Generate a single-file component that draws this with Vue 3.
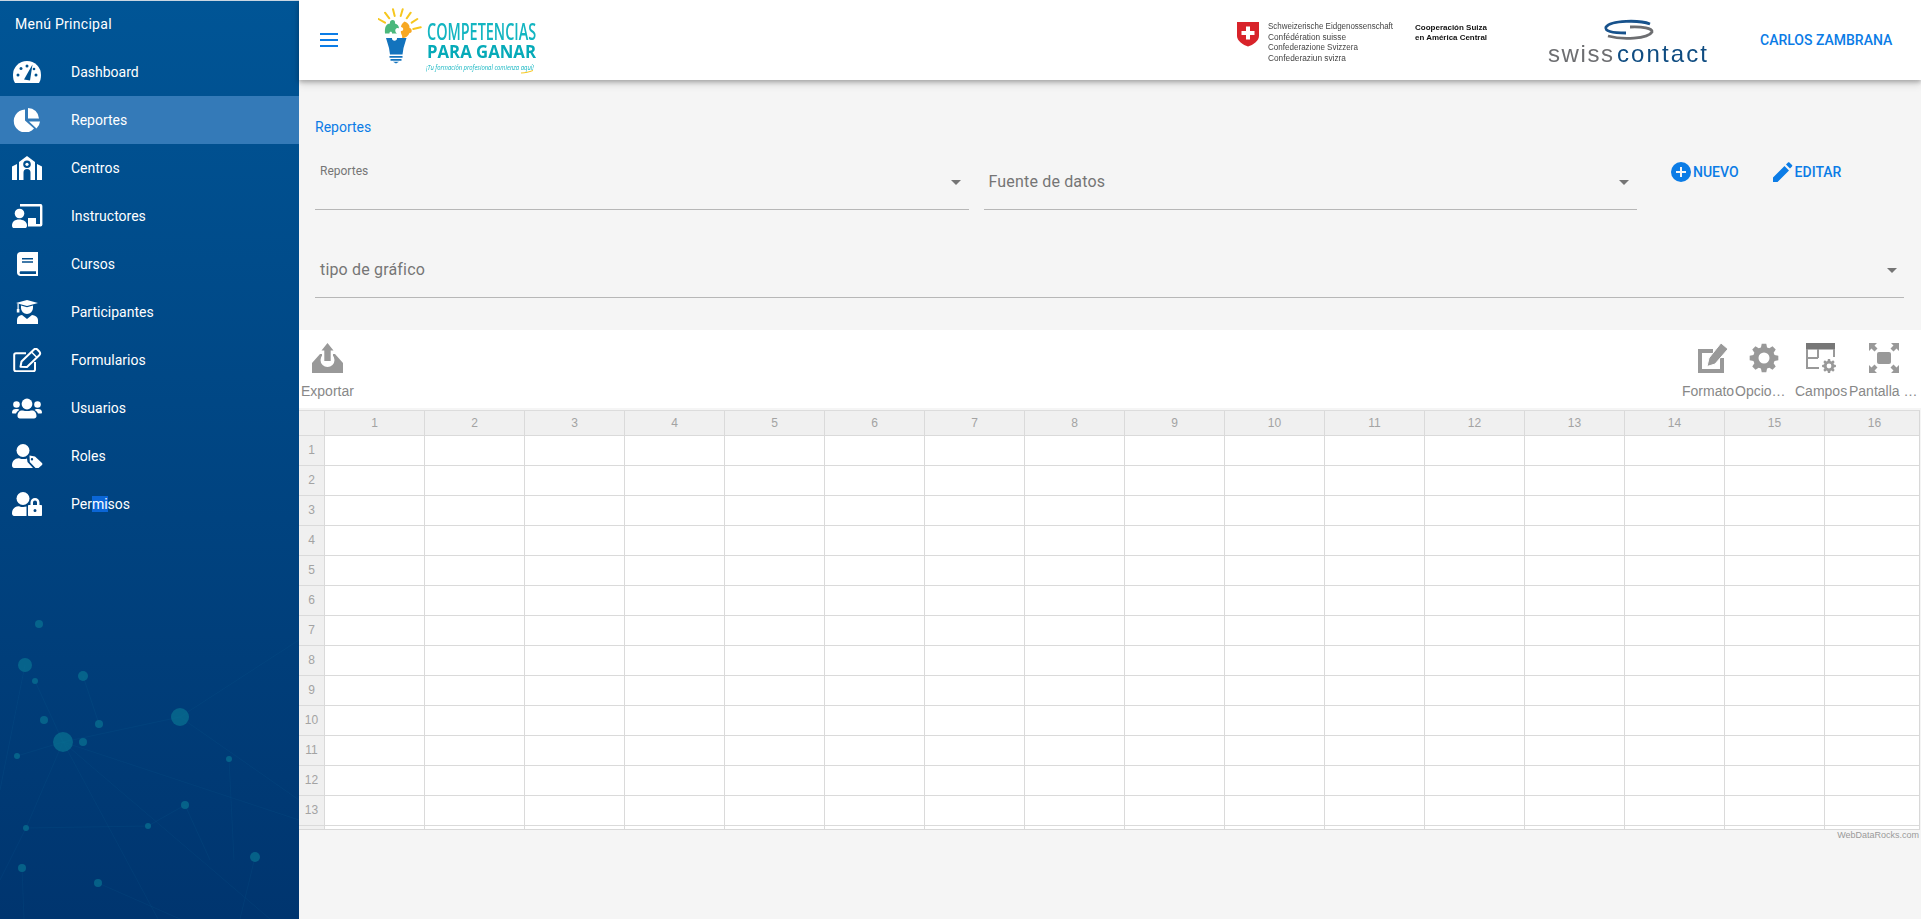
<script setup>
const hole = '#00528f'
const menu = [
  { label: 'Dashboard', icon: `<path d="M4 23C2.6 21 2 18 2 15A14 14 0 0 1 30 15C30 18 29.4 21 28 23Z"/><g fill="${hole}"><circle cx="7" cy="15" r="1.5"/><circle cx="10" cy="8.5" r="1.5"/><circle cx="16" cy="6" r="1.5"/><circle cx="25" cy="15" r="1.5"/><circle cx="23" cy="9" r="1.3"/><path d="M21.5 4.5L13 19.5 19 20.5Z"/></g>` },
  { label: 'Reportes', active: true, icon: `<path d="M14 1.5A11.5 11.5 0 1 0 23 20.5L14 12.5Z"/><path d="M17 0A11 11 0 0 1 28 10.5H17Z"/><path d="M18 13.5H29A11 11 0 0 1 25.5 20.5Z"/>` },
  { label: 'Centros', icon: `<path fill-rule="evenodd" d="M16 0L24 6V24H19.5V16.5A3.5 3.5 0 0 0 12.5 16.5V24H8V6ZM16 4.5A3.8 3.8 0 1 0 16 12.1 3.8 3.8 0 0 0 16 4.5Z"/><circle cx="16" cy="8.3" r="1.6"/><path d="M1 10.5L6 8V24H1Z"/><path d="M31 10.5L26 8V24H31Z"/>` },
  { label: 'Instructores', icon: `<circle cx="8.5" cy="9.5" r="4.8"/><path d="M1 21.5C1 17.5 4 15.5 8 15.5S16 17.5 16 21.5C16 23.5 15 24 14 24H3C2 24 1 23.5 1 21.5Z"/><path d="M9 1.2H29.5A.8 .8 0 0 1 30.2 2V20.5A.8 .8 0 0 1 29.5 21.2H17" fill="none" stroke="currentColor" stroke-width="2.4"/><path d="M17 14H25V21H17Z"/>` },
  { label: 'Cursos', icon: `<path fill-rule="evenodd" d="M9.5 0H27V24H9.5C7.5 24 6 22.5 6 20.5V3.500C6 1.500 7.500 0 9.5 0ZM10 19.300C9 19.300 8.600 20 8.600 20.800S9 22 10 22H25V19.300ZM11 6V7.500H22V6ZM11 9.300V10.800H22V9.300Z"/>` },
  { label: 'Participantes', icon: `<path d="M16 0L27 3 16 6 5 3Z"/><rect x="6.500" y="3.500" width="1.200" height="7"/><rect x="5.800" y="9" width="2.600" height="3.500"/><path d="M10 5.500L16 7.300 22 5.500V8A6 6 0 0 1 10 8Z"/><path d="M6 24V20C6 17 8 15.500 11 15L16 19 21 15C24 15.500 27 17 27 20V24Z"/>` },
  { label: 'Formularios', icon: `<path d="M24 14V21.500A1.800 1.800 0 0 1 22.200 23.300H5A1.800 1.800 0 0 1 3.200 21.500V7A1.800 1.800 0 0 1 5 5.200H15" fill="none" stroke="currentColor" stroke-width="2"/><path d="M9.500 18.800L10.500 13.500 23 1.500C24 .6 25.300 .6 26.300 1.500L28.500 3.800C29.300 4.800 29.300 6 28.500 7L16 19Z" fill="none" stroke="currentColor" stroke-width="2" stroke-linejoin="round"/><path d="M20.500 4L26 9.500" stroke="currentColor" stroke-width="1.500"/>` },
  { label: 'Usuarios', icon: `<circle cx="16" cy="8" r="5.400"/><circle cx="5.500" cy="8.500" r="3.300"/><circle cx="26.500" cy="8.500" r="3.300"/><path d="M6.500 20C6.500 16 9 14 12 14.500C14.500 15.300 17.500 15.300 20 14.500C23 14 25.500 16 25.500 20C25.500 21.500 24.500 22.500 23 22.500H9C7.500 22.500 6.500 21.500 6.500 20Z"/><path d="M1 16.500C1 14 2.500 13 5 13S8 13.500 8.500 14C6.500 15 5.300 16.500 5 17.500H2C1.400 17.500 1 17 1 16.500Z"/><path d="M31 16.500C31 14 29.500 13 27 13S24 13.500 23.500 14C25.500 15 26.700 16.500 27 17.500H30C30.600 17.500 31 17 31 16.500Z"/>` },
  { label: 'Roles', icon: `<circle cx="12" cy="6.500" r="6.500"/><path d="M1 21.500C1 17 4 14 8 14.200C11 15.300 14 15.300 16 14.500L16.500 18 22 24H3C2 24 1 23 1 21.500Z"/><path fill-rule="evenodd" d="M18.500 11.500L24 12.500 31 19C31.500 19.700 31.500 20.300 31 21L27 24.500C26.300 25 25.500 25 25 24.500L18.800 18ZM21 14A1.200 1.200 0 1 0 21 16.400 1.200 1.200 0 0 0 21 14Z"/>` },
  { label: 'Permisos', select: true, icon: `<circle cx="12" cy="6.500" r="6.500"/><path d="M1 21.500C1 17 4 14 8 14.200C10.500 15.300 13 15.300 15.500 14.600V24H3C2 24 1 23 1 21.500Z"/><path fill-rule="evenodd" d="M19.500 13V10.500A4.500 4.500 0 0 1 28.500 10.500V13H30C30.600 13 31 13.400 31 14V23C31 23.600 30.600 24 30 24H18C17.400 24 17 23.600 17 23V14C17 13.400 17.400 13 18 13ZM22 13H26V10.500A2 2 0 0 0 22 10.500ZM24 17A1.500 1.500 0 1 0 24 20 1.500 1.500 0 0 0 24 17Z"/>` }
]
const nodes = [[39,624,4],[25,665,7],[35,681,3],[83,676,5],[44,720,4],[99,724,4],[63,742,10],[83,742,4],[17,756,3],[180,717,9],[229,759,3],[185,805,4],[148,826,3],[26,828,3],[22,868,4],[98,883,4],[255,857,5]]
const links = [[63,742,180,717],[63,742,299,820],[63,742,158,919],[63,742,270,919],[63,742,26,828],[26,828,0,880],[26,828,148,826],[148,826,185,805],[185,805,210,860],[180,717,299,800],[180,717,299,640],[25,665,0,790],[229,759,234,860],[255,857,240,919],[22,868,24,919],[98,883,180,919],[35,681,63,742],[17,756,63,742],[83,676,99,724]]

function gear(cx, cy, ro, ri, hr, teeth = 8) {
  const pts = []
  const step = (Math.PI * 2) / teeth
  for (let i = 0; i < teeth; i++) {
    const a = i * step
    const offs = [[-0.36, ri], [-0.2, ro], [0.2, ro], [0.36, ri]]
    for (const [o, r] of offs) {
      const t = a + o * step
      pts.push(`${(cx + r * Math.cos(t)).toFixed(2)} ${(cy + r * Math.sin(t)).toFixed(2)}`)
    }
  }
  return `M${pts.join('L')}ZM${cx - hr} ${cy}A${hr} ${hr} 0 1 0 ${cx + hr} ${cy}A${hr} ${hr} 0 1 0 ${cx - hr} ${cy}Z`
}
const bigGear = gear(15, 15, 14.5, 11, 5.5)
const smallGear = gear(23, 23, 7, 5.200, 2.400)

const columns = Array.from({ length: 16 }, (_, i) => i + 1)
const rows = Array.from({ length: 14 }, (_, i) => i + 1)
</script>

<template>
  <div class="app">
    <aside class="sidebar">
      <svg class="network" viewBox="0 0 299 919" aria-hidden="true">
        <line v-for="(l, i) in links" :key="'l' + i" :x1="l[0]" :y1="l[1]" :x2="l[2]" :y2="l[3]" class="link" />
        <circle v-for="(n, i) in nodes" :key="'n' + i" :cx="n[0]" :cy="n[1]" :r="n[2]" class="node" />
      </svg>
      <div class="menu-title">Menú Principal</div>
      <nav class="menu">
        <a v-for="m in menu" :key="m.label" class="menu-item" :class="{ active: m.active }">
          <svg class="menu-icon" viewBox="0 0 32 24" width="32" height="24" fill="currentColor" v-html="m.icon"></svg>
          <span v-if="m.select">Per<span class="selected">mi</span>sos</span>
          <span v-else>{{ m.label }}</span>
        </a>
      </nav>
    </aside>

    <main class="main">
      <header class="topbar">
        <button class="burger" aria-label="menu"><i></i><i></i><i></i></button>
        <svg class="logo" viewBox="378 5 162 70" width="162" height="70">
          <g stroke="#f6c71e" stroke-width="2" stroke-linecap="round">
            <path d="M378.500 19L385 22.700M385 12.700L389.300 18.300M393 9.300L394.700 16M402.700 9.300L400.700 16M410.700 12.700L406.700 18.300M417.300 19L411.700 22.700M420.700 27.300L413.300 29" />
          </g>
          <path fill="#4bb87c" d="M385 33.500C384.500 27 386 24 390 23.500C389 19 396 18.500 395 23.500C397.500 24 399 26 399 28.500C396 26.500 393.500 31 397 33.500H392C392.500 31 389 31 389.500 33.500Z" />
          <path fill="#f7a823" d="M404.500 21.500C407.500 22.500 410 25 409.500 28C412.500 28.500 412.500 33.500 409.500 33C408.500 36 405.500 38 402 38.500C403 35.500 400 33 401 31C404 31.500 404 27 401 27C401 25 402.500 23 404.500 21.500Z" />
          <path fill="#1373bd" d="M386 38H392C391.500 41.500 397.500 41.500 397 38H406.500L403.500 48 402.500 54.500H390L389 48Z" />
          <path fill="#1373bd" d="M389.500 56H402.500V57.700H389.500ZM390.500 59H401.500V60.700H390.500ZM393 61.700H399L396 63.500Z" />
          <text class="lg1" transform="translate(427 40) scale(.62 1)" textLength="176" lengthAdjust="spacingAndGlyphs">COMPETENCIAS</text>
          <text x="427" y="57.500" class="lg2" textLength="109" lengthAdjust="spacingAndGlyphs">PARA GANAR</text>
          <text class="lg3" transform="translate(426 69.500) scale(.7 1)" textLength="154" lengthAdjust="spacingAndGlyphs">¡Tu formación profesional comienza aquí!</text>
          <path d="M521 73C525 73 529 72 533 70.500" stroke="#f6c71e" stroke-width="1" fill="none" />
        </svg>
        <div class="spacer"></div>
        <svg class="partners" viewBox="1230 10 484 60" width="484" height="60">
          <path fill="#d8232a" d="M1237 22H1259V36C1259 41 1253 45 1248 46.500C1243 45 1237 41 1237 36Z" />
          <path fill="#fff" d="M1246 26.500H1250V31H1254.500V35H1250V39.500H1246V35H1241.500V31H1246Z" />
          <g class="swiss-lines">
            <text x="1268" y="29" textLength="125" lengthAdjust="spacingAndGlyphs">Schweizerische Eidgenossenschaft</text>
            <text x="1268" y="40" textLength="78" lengthAdjust="spacingAndGlyphs">Confédération suisse</text>
            <text x="1268" y="50" textLength="90" lengthAdjust="spacingAndGlyphs">Confederazione Svizzera</text>
            <text x="1268" y="60.500" textLength="78" lengthAdjust="spacingAndGlyphs">Confederaziun svizra</text>
          </g>
          <g class="coop">
            <text x="1415" y="30" textLength="72" lengthAdjust="spacingAndGlyphs">Cooperación Suiza</text>
            <text x="1415" y="40" textLength="72" lengthAdjust="spacingAndGlyphs">en América Central</text>
          </g>
          <path d="M1650 24C1640 20 1611 20 1606 27C1604 31 1612 33 1626 33" fill="none" stroke="#17528c" stroke-width="2.800" />
          <path d="M1608 36C1622 40 1648 39 1652 32C1653 28 1642 26.500 1630 27" fill="none" stroke="#6d6e71" stroke-width="2.800" />
          <text x="1548" y="62" class="sc sc-g" textLength="65" lengthAdjust="spacing">swiss</text>
          <text x="1617" y="62" class="sc sc-b" textLength="90" lengthAdjust="spacing">contact</text>
        </svg>
        <div class="user">CARLOS ZAMBRANA</div>
      </header>

      <section class="content">
        <div class="crumb">Reportes</div>
        <div class="form-row">
          <div class="field">
            <span class="field-label small">Reportes</span>
            <span class="caret"></span>
          </div>
          <div class="field">
            <span class="field-label">Fuente de datos</span>
            <span class="caret"></span>
          </div>
          <div class="actions">
            <button class="action">
              <svg width="20" height="20" viewBox="0 0 20 20"><circle cx="10" cy="10" r="10" fill="#0b7ce6" /><path d="M9 5H11V9H15V11H11V15H9V11H5V9H9Z" fill="#f5f5f5" /></svg>
              NUEVO
            </button>
            <button class="action">
              <svg width="20" height="20" viewBox="0 0 20 20"><path d="M0 20V15.500L11.500 4 16 8.500 4.500 20ZM13 2.500L15 .5C15.400 .1 16 .1 16.400 .5L19 3.100C19.400 3.500 19.400 4.100 19 4.500L17 6.500Z" fill="#0b7ce6" /></svg>
              EDITAR
            </button>
          </div>
        </div>
        <div class="field wide">
          <span class="field-label">tipo de gráfico</span>
          <span class="caret"></span>
        </div>
      </section>

      <section class="pivot">
        <div class="toolbar">
          <div class="tool export">
            <svg width="31" height="30" viewBox="0 0 31 30" fill="#999">
              <path d="M8 11H11V14H20V11H23L31 20V30H0V20Z" />
              <circle cx="15.500" cy="17" r="7" fill="#fff" />
              <rect x="10" y="10" width="11" height="7" fill="#fff" />
              <path d="M15.500 0L21.500 7.500H18.700V18H12.300V7.500H9.500Z" />
            </svg>
            <span>Exportar</span>
          </div>
          <div class="tool-group">
            <div class="tool t-format">
              <svg width="30" height="30" viewBox="0 0 30 30" fill="#999">
                <path d="M24 15V28H2V8H15" fill="none" stroke="#999" stroke-width="4" />
                <path d="M23 0L30 6 17 21 9 23.500 11 15Z" stroke="#fff" stroke-width="1" />
              </svg>
              <span>Formato</span>
            </div>
            <div class="tool t-options">
              <svg width="30" height="30" viewBox="0 0 30 30" fill="#999"><path fill-rule="evenodd" :d="bigGear" /></svg>
              <span>Opciones</span>
            </div>
            <div class="tool t-fields">
              <svg width="30" height="30" viewBox="0 0 30 30" fill="#999">
                <rect x="0" y="0" width="29" height="6.500" fill="#777" />
                <path d="M1 6V25H13M1 15H12M12 6V15M28 6V14" fill="none" stroke="#999" stroke-width="2" />
                <path fill-rule="evenodd" :d="smallGear" />
              </svg>
              <span>Campos</span>
            </div>
            <div class="tool t-full">
              <svg width="30" height="30" viewBox="0 0 30 30" fill="#999">
                <rect x="8" y="9" width="14" height="12" rx="2" />
                <path d="M0 0H8L5.500 2.500 8.500 5.500 5.500 8.500 2.500 5.500 0 8ZM30 0H22L24.500 2.500 21.500 5.500 24.500 8.500 27.500 5.500 30 8ZM0 30H8L5.500 27.500 8.500 24.500 5.500 21.500 2.500 24.500 0 22ZM30 30H22L24.500 27.500 21.500 24.500 24.500 21.500 27.500 24.500 30 22Z" />
              </svg>
              <span>Pantalla completa</span>
            </div>
          </div>
        </div>
        <div class="grid-wrap">
          <div class="grid-row head">
            <div class="cell corner"></div>
            <div v-for="c in columns" :key="c" class="cell col">{{ c }}</div>
          </div>
          <div v-for="r in rows" :key="r" class="grid-row">
            <div class="cell rowhead">{{ r }}</div>
            <div v-for="c in columns" :key="c" class="cell col body"></div>
          </div>
        </div>
        <div class="credit">WebDataRocks.com</div>
      </section>
    </main>
  </div>
</template>

<style>
html, body { margin: 0; padding: 0; background: #f5f5f5; }
</style>

<style scoped>
.app {
  display: flex;
  height: 919px;
  overflow: hidden;
  font-family: Roboto, "Liberation Sans", sans-serif;
  background: #f5f5f5;
}
.sidebar {
  position: relative;
  flex: 0 0 299px;
  box-sizing: border-box;
  height: 919px;
  border-top: 1px solid #c9d6e2;
  background: linear-gradient(180deg, #005596 0%, #00356f 100%);
  color: #fff;
  overflow: hidden;
}
.network {
  position: absolute;
  left: 0;
  top: -1px;
  width: 299px;
  height: 919px;
}
.link { stroke: #0d6f97; stroke-opacity: .13; stroke-width: 1; }
.node { fill: #0a7a96; fill-opacity: .62; }
.menu-title {
  position: relative;
  height: 47px;
  line-height: 47px;
  padding-left: 15px;
  font-size: 14px;
  letter-spacing: .28px;
}
.menu { position: relative; display: flex; flex-direction: column; }
.menu-item {
  display: flex;
  align-items: center;
  height: 48px;
  padding-left: 11px;
  font-size: 14px;
}
.menu-item.active { background: #347ab8; }
.menu-icon { flex: none; margin-right: 28px; }
.selected { background: #0b66d6; }

.main { flex: 1; min-width: 0; display: flex; flex-direction: column; }
.topbar {
  position: relative;
  z-index: 2;
  flex: none;
  height: 80px;
  display: flex;
  align-items: center;
  background: #fff;
  box-shadow: 0 2px 4px rgba(0,0,0,.22), 0 4px 8px rgba(0,0,0,.15);
}
.burger {
  flex: none;
  width: 18px;
  height: 14px;
  margin-left: 21px;
  padding: 0;
  border: 0;
  background: none;
  display: flex;
  flex-direction: column;
  justify-content: space-between;
}
.burger i { display: block; height: 2px; background: #0b7ce6; }
.logo { flex: none; margin-left: 40px; filter: blur(.35px); }
.lg1 { font-family: "Open Sans", sans-serif; font-weight: 600; font-size: 24px; fill: #13b5c1; }
.lg2 { font-family: "Open Sans", sans-serif; font-weight: 700; font-size: 17px; fill: #05aab8; }
.lg3 { font-family: "Open Sans", sans-serif; font-style: italic; font-size: 8px; fill: #13b5c1; }
.spacer { flex: 1; }
.partners { flex: none; filter: blur(.25px); }
.swiss-lines text { font-family: "Liberation Sans", sans-serif; font-size: 8.500px; fill: #444; }
.coop text { font-family: "Liberation Sans", sans-serif; font-size: 8px; font-weight: 700; fill: #111; }
.sc { font-family: "Liberation Sans", sans-serif; font-size: 24px; }
.sc-g { fill: #6d6e71; }
.sc-b { fill: #0f4c81; }
.user {
  flex: none;
  width: 161px;
  margin-left: 46px;
  font-size: 14px;
  font-weight: 500;
  color: #0b7ce6;
  white-space: nowrap;
}

.content {
  flex: none;
  height: 250px;
  box-sizing: border-box;
  padding: 37px 17px 0 16px;
  display: flex;
  flex-direction: column;
}
.crumb { height: 20px; line-height: 20px; font-size: 14px; color: #0b7ce6; }
.form-row { display: flex; margin-top: 13px; gap: 15px; }
.field {
  position: relative;
  flex: 1;
  height: 60px;
  box-sizing: border-box;
  border-bottom: 1px solid #b7b7b7;
}
.field.wide { flex: none; margin-top: 28px; }
.field.wide .caret { right: 7px; }
.field-label {
  position: absolute;
  left: 5px;
  top: 23px;
  font-size: 16px;
  line-height: 18px;
  letter-spacing: .17px;
  color: #757575;
}
.field-label.small { top: 14px; font-size: 12px; line-height: 14px; letter-spacing: 0; }
.caret {
  position: absolute;
  right: 8px;
  top: 30px;
  width: 0;
  height: 0;
  border-left: 5px solid transparent;
  border-right: 5px solid transparent;
  border-top: 5px solid #757575;
}
.actions { flex: 0 0 267px; display: flex; align-items: flex-start; margin-left: -15px; padding-left: 34px; box-sizing: border-box; gap: 34px; }
.action {
  display: flex;
  align-items: center;
  gap: 2px;
  height: 44px;
  padding: 0;
  border: 0;
  background: none;
  font-family: Roboto, sans-serif;
  font-size: 14px;
  font-weight: 500;
  color: #0b7ce6;
}

.pivot { flex: none; display: flex; flex-direction: column; font-family: "Liberation Sans", Arial, sans-serif; }
.toolbar {
  height: 78px;
  background: #fff;
  display: flex;
  justify-content: space-between;
  box-sizing: border-box;
  padding: 13px 2px 0 2px;
}
.tool-group { display: flex; }
.tool {
  display: flex;
  flex-direction: column;
  font-size: 14px;
  color: #888;
  white-space: nowrap;
}
.tool svg { flex: none; display: block; margin-bottom: 10px; }
.tool span { display: block; overflow: hidden; text-overflow: ellipsis; line-height: 16px; }
.export { width: 54px; }
.export svg { margin-left: 11px; }
.t-format { width: 54px; }
.t-format svg { margin-left: 17px; }
.t-options { width: 53px; margin-left: 0; }
.t-options svg { margin-left: 14px; }
.t-fields { width: 53px; margin-left: 7px; }
.t-fields svg { margin-left: 11px; }
.t-full { width: 70px; margin-left: 1px; }
.t-full svg { margin-left: 20px; }
.t-format span { padding-left: 1px; }

.grid-wrap {
  margin-top: 2px;
  height: 420px;
  width: 1621px;
  box-sizing: border-box;
  overflow: hidden;
  border-top: 1px solid #dcdcdc;
  border-bottom: 1px solid #d8d8d8;
  border-right: 1px solid #d8d8d8;
  background: #fff;
}
.grid-row { display: flex; height: 30px; }
.grid-row.head { height: 25px; background: #f0f0f0; }
.cell {
  flex: 0 0 100px;
  box-sizing: border-box;
  border-right: 1px solid #dadada;
  border-bottom: 1px solid #dadada;
  font-size: 12px;
  color: #a3a3a3;
  text-align: center;
  line-height: 24px;
}
.cell.corner, .cell.rowhead { flex: 0 0 26px; background: #f0f0f0; }
.cell.rowhead { line-height: 29px; }
.credit {
  height: 14px;
  padding-right: 2px;
  text-align: right;
  font-size: 9px;
  line-height: 11px;
  color: #9a9a9a;
}
</style>
